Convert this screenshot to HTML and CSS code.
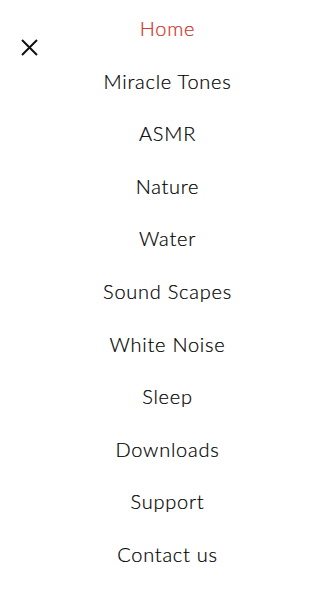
FILE: index.html
```html
<!DOCTYPE html>
<html>
<head>
<meta charset="utf-8">
<link rel="stylesheet" href="styles.css">
</head>
<body>
<div class="menu">
  <button class="close" aria-label="Close">
    <svg width="17" height="17" viewBox="0 0 17 17"><path d="M1 1 L16 16 M16 1 L1 16" stroke="#111" stroke-width="2" fill="none"/></svg>
  </button>
  <nav class="nav">
    <a class="item active">Home</a>
    <a class="item">Miracle Tones</a>
    <a class="item">ASMR</a>
    <a class="item">Nature</a>
    <a class="item">Water</a>
    <a class="item">Sound Scapes</a>
    <a class="item">White Noise</a>
    <a class="item">Sleep</a>
    <a class="item">Downloads</a>
    <a class="item">Support</a>
    <a class="item">Contact us</a>
  </nav>
</div>
</body>
</html>
```
FILE: styles.css
```css
html, body { margin: 0; padding: 0; background: #fff; }
body { font-family: Lato, "Open Sans", sans-serif; }
.menu { position: relative; width: 333px; height: 592px; overflow: hidden; }
.close { position: absolute; left: 21px; top: 39px; width: 17px; height: 17px; padding: 0; border: 0; background: none; display: block; }
.close svg { display: block; }
.nav { display: flex; flex-direction: column; align-items: center; padding-top: 2px; padding-left: 2px; }
.item { display: block; height: 52.6px; line-height: 52.6px; font-size: 20px; font-weight: 300; color: #000; text-align: center; letter-spacing: 0.75px; -webkit-text-stroke: 0.2px currentColor; }
.item.active { color: #cf2f25; }
```
